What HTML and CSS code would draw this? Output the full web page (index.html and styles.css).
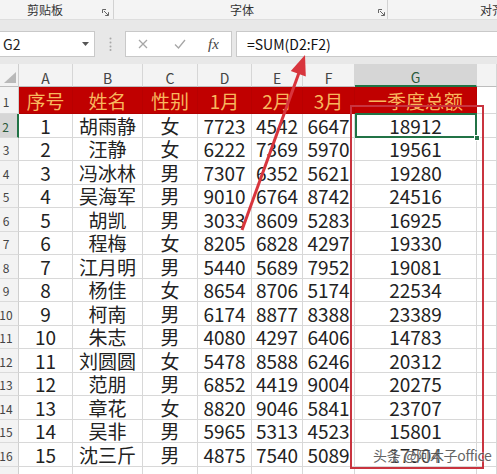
FILE: index.html
```html
<!DOCTYPE html>
<html lang="zh">
<head>
<meta charset="utf-8">
<title>Excel</title>
<link rel="stylesheet" href="styles.css">
</head>
<body>
<div class="ribbon">
  <div class="rgroup g1"><span class="rlabel">剪贴板</span><svg class="launcher" width="7" height="7" viewBox="0 0 7 7"><path d="M0.5 4V0.5H4M2 2L6.3 6.3M3.2 6.5H6.5V3.2" fill="none" stroke="#666" stroke-width="1"/></svg></div>
  <div class="rgroup g2"><span class="rlabel">字体</span><svg class="launcher" width="7" height="7" viewBox="0 0 7 7"><path d="M0.5 4V0.5H4M2 2L6.3 6.3M3.2 6.5H6.5V3.2" fill="none" stroke="#666" stroke-width="1"/></svg></div>
  <div class="rgroup g3"><span class="rlabel">对齐</span></div>
</div>
<div class="fbar">
  <div class="namebox"><span>G2</span><svg class="caret" width="7" height="4" viewBox="0 0 7 4"><path d="M0 0H7L3.5 4Z" fill="#555"/></svg></div>
  <div class="grip"><svg width="3" height="14" viewBox="0 0 3 14"><circle cx="1.5" cy="1.5" r="1" fill="#a8a8a8"/><circle cx="1.5" cy="5.5" r="1" fill="#a8a8a8"/><circle cx="1.5" cy="9.5" r="1" fill="#a8a8a8"/><circle cx="1.5" cy="13" r="1" fill="#a8a8a8"/></svg></div>
  <div class="fbtns">
    <svg class="ic-x" width="10" height="10" viewBox="0 0 10 10"><path d="M1 1L9 9M9 1L1 9" stroke="#a6a6a6" stroke-width="1.3"/></svg>
    <svg class="ic-ok" width="12" height="10" viewBox="0 0 12 10"><path d="M1 5.5L4.5 9L11 1" fill="none" stroke="#a6a6a6" stroke-width="1.3"/></svg>
    <span class="fx">fx</span>
  </div>
  <div class="finput">=SUM(D2:F2)</div>
</div>
<div class="sheet">
  <div class="corner"><span class="tri"></span></div>
  <div class="ch">A</div><div class="ch">B</div><div class="ch">C</div><div class="ch">D</div><div class="ch">E</div><div class="ch">F</div><div class="ch selcol">G</div><div class="ch"></div>

  <div class="rh">1</div><div class="c hd">序号</div><div class="c hd">姓名</div><div class="c hd">性别</div><div class="c hd">1月</div><div class="c hd">2月</div><div class="c hd">3月</div><div class="c hd">一季度总额</div><div class="c"></div>

  <div class="rh selrow">2</div><div class="c">1</div><div class="c">胡雨静</div><div class="c">女</div><div class="c">7723</div><div class="c">4542</div><div class="c">6647</div><div class="c active">18912<span class="handle"></span></div><div class="c"></div>
  <div class="rh">3</div><div class="c">2</div><div class="c">汪静</div><div class="c">女</div><div class="c">6222</div><div class="c">7369</div><div class="c">5970</div><div class="c">19561</div><div class="c"></div>
  <div class="rh">4</div><div class="c">3</div><div class="c">冯冰林</div><div class="c">男</div><div class="c">7307</div><div class="c">6352</div><div class="c">5621</div><div class="c">19280</div><div class="c"></div>
  <div class="rh">5</div><div class="c">4</div><div class="c">吴海军</div><div class="c">男</div><div class="c">9010</div><div class="c">6764</div><div class="c">8742</div><div class="c">24516</div><div class="c"></div>
  <div class="rh">6</div><div class="c">5</div><div class="c">胡凯</div><div class="c">男</div><div class="c">3033</div><div class="c">8609</div><div class="c">5283</div><div class="c">16925</div><div class="c"></div>
  <div class="rh">7</div><div class="c">6</div><div class="c">程梅</div><div class="c">女</div><div class="c">8205</div><div class="c">6828</div><div class="c">4297</div><div class="c">19330</div><div class="c"></div>
  <div class="rh">8</div><div class="c">7</div><div class="c">江月明</div><div class="c">男</div><div class="c">5440</div><div class="c">5689</div><div class="c">7952</div><div class="c">19081</div><div class="c"></div>
  <div class="rh">9</div><div class="c">8</div><div class="c">杨佳</div><div class="c">女</div><div class="c">8654</div><div class="c">8706</div><div class="c">5174</div><div class="c">22534</div><div class="c"></div>
  <div class="rh">10</div><div class="c">9</div><div class="c">柯南</div><div class="c">男</div><div class="c">6174</div><div class="c">8877</div><div class="c">8388</div><div class="c">23389</div><div class="c"></div>
  <div class="rh">11</div><div class="c">10</div><div class="c">朱志</div><div class="c">男</div><div class="c">4080</div><div class="c">4297</div><div class="c">6406</div><div class="c">14783</div><div class="c"></div>
  <div class="rh">12</div><div class="c">11</div><div class="c">刘圆圆</div><div class="c">女</div><div class="c">5478</div><div class="c">8588</div><div class="c">6246</div><div class="c">20312</div><div class="c"></div>
  <div class="rh">13</div><div class="c">12</div><div class="c">范朋</div><div class="c">男</div><div class="c">6852</div><div class="c">4419</div><div class="c">9004</div><div class="c">20275</div><div class="c"></div>
  <div class="rh">14</div><div class="c">13</div><div class="c">章花</div><div class="c">女</div><div class="c">8820</div><div class="c">9046</div><div class="c">5841</div><div class="c">23707</div><div class="c"></div>
  <div class="rh">15</div><div class="c">14</div><div class="c">吴非</div><div class="c">男</div><div class="c">5965</div><div class="c">5313</div><div class="c">4523</div><div class="c">15801</div><div class="c"></div>
  <div class="rh">16</div><div class="c">15</div><div class="c">沈三斤</div><div class="c">男</div><div class="c">4875</div><div class="c">7540</div><div class="c">5089</div><div class="c">17504</div><div class="c"></div>
  <div class="rh">17</div><div class="c"></div><div class="c"></div><div class="c"></div><div class="c"></div><div class="c"></div><div class="c"></div><div class="c"></div><div class="c"></div>
</div>
<svg class="overlay" width="497" height="474" viewBox="0 0 497 474">
  <rect x="351" y="106" width="132" height="362" fill="none" stroke="#c9343f" stroke-width="2"/>
  <line x1="242" y1="230" x2="300" y2="70" stroke="#d8353d" stroke-width="3"/>
  <polygon points="305,55 305.8,76.5 290.8,71.1" fill="#d8353d"/>
</svg>
<div class="watermark">头条 @阿木子office</div>
</body>
</html>
```
FILE: styles.css
```css
* { box-sizing: border-box; }
body {
  margin: 0;
  width: 497px;
  height: 474px;
  overflow: hidden;
  position: relative;
  background: #fff;
  font-family: "Noto Sans CJK SC", sans-serif;
}
.ribbon {
  height: 20px;
  background: #f4f4f4;
  display: flex;
  border-bottom: 1px solid #dedede;
  font-size: 12px;
  color: #333;
}
.rgroup {
  display: flex;
  align-items: center;
  border-right: 1px solid #d2d2d2;
  height: 19px;
  white-space: nowrap;
}
.rlabel { line-height: 1; padding-top: 1px; }
.g1 { width: 114px; padding-left: 27px; }
.g1 .launcher { margin-left: auto; margin-right: 4px; margin-top: 5px; }
.g2 { width: 274px; padding-left: 116px; }
.g2 .launcher { margin-left: auto; margin-right: 2px; margin-top: 5px; }
.g3 { flex: 1; padding-left: 92px; border-right: none; overflow: hidden; }

.fbar {
  height: 44px;
  background: #e8e8e8;
  display: flex;
  align-items: flex-start;
  padding-top: 11px;
}
.namebox {
  width: 95px;
  height: 26px;
  background: #fff;
  border: 1px solid #c9c9c9;
  border-left: none;
  display: flex;
  align-items: center;
  padding: 0 5px 0 3px;
  font-size: 14px;
  color: #222;
}
.caret { margin-left: auto; }
.grip {
  width: 30px;
  height: 26px;
  display: flex;
  align-items: center;
  justify-content: center;
  padding-left: 1px;
}
.fbtns {
  width: 107px;
  height: 26px;
  background: #fff;
  border: 1px solid #c9c9c9;
  display: flex;
  align-items: center;
  padding-left: 12px;
}
.ic-ok { margin-left: 26px; }
.fx {
  margin-left: 22px;
  font-family: "Liberation Serif", serif;
  font-style: italic;
  font-size: 15px;
  color: #444;
  line-height: 1;
}
.finput {
  flex: 1;
  height: 26px;
  margin-left: 4px;
  background: #fff;
  border: 1px solid #c9c9c9;
  border-right: none;
  padding-left: 10px;
  display: flex;
  align-items: center;
  font-size: 14px;
  color: #111;
}

.sheet {
  display: grid;
  grid-template-columns: 19px 54px 70px 55px 54px 51px 52px 122px 1fr;
  grid-template-rows: 23px 27px;
  grid-auto-rows: 23.5px;
}
.corner, .ch, .rh {
  background: #f3f3f3;
  color: #444;
}
.corner {
  display: flex;
  align-items: flex-end;
  justify-content: flex-end;
  padding: 0 2px 3px 0;
  border-right: 1px solid #cfcfcf;
  border-bottom: 1px solid #bdbdbd;
}
.tri {
  width: 0;
  height: 0;
  border-left: 12px solid transparent;
  border-bottom: 11px solid #b9b9b9;
}
.ch {
  display: flex;
  align-items: center;
  justify-content: center;
  padding-top: 5px;
  font-size: 14px;
  border-right: 1px solid #d6d6d6;
  border-bottom: 1px solid #bdbdbd;
}
.ch.selcol {
  background: #d6d6d6;
  color: #2b5a3c;
  border-bottom: 2px solid #217346;
}
.rh {
  display: flex;
  align-items: center;
  justify-content: center;
  padding-right: 6px;
  padding-top: 2px;
  font-size: 12px;
  border-right: 1px solid #cfcfcf;
  border-bottom: 1px solid #dadada;
  white-space: nowrap;
}
.rh.selrow {
  background: #d6d6d6;
  color: #2b5a3c;
  border-right: 2px solid #217346;
}
.c {
  display: flex;
  align-items: center;
  justify-content: center;
  font-size: 19px;
  line-height: 1;
  color: #222;
  border-right: 1px solid #d8d8d8;
  border-bottom: 1px solid #d8d8d8;
  white-space: nowrap;
}
.c.hd {
  background: #c00000;
  color: #f8b75e;
  border-right-color: #b80000;
  border-bottom-color: #b00000;
  padding-top: 1px;
}
.c.active {
  position: relative;
}
.c.active::after {
  content: "";
  position: absolute;
  left: 0;
  top: -1px;
  right: -1px;
  bottom: -1px;
  border: 2px solid #217346;
}
.handle {
  position: absolute;
  right: -4px;
  bottom: -4px;
  width: 6px;
  height: 6px;
  background: #217346;
  border: 1px solid #fff;
  z-index: 2;
}
.overlay {
  position: absolute;
  left: 0;
  top: 0;
  pointer-events: none;
}
.watermark {
  position: absolute;
  left: 373px;
  top: 445px;
  font-size: 14px;
  color: #4a4a4a;
  opacity: 0.85;
  text-shadow: 0 0 2px #fff, 0 0 2px #fff;
  white-space: nowrap;
  letter-spacing: -0.3px;
}
```
